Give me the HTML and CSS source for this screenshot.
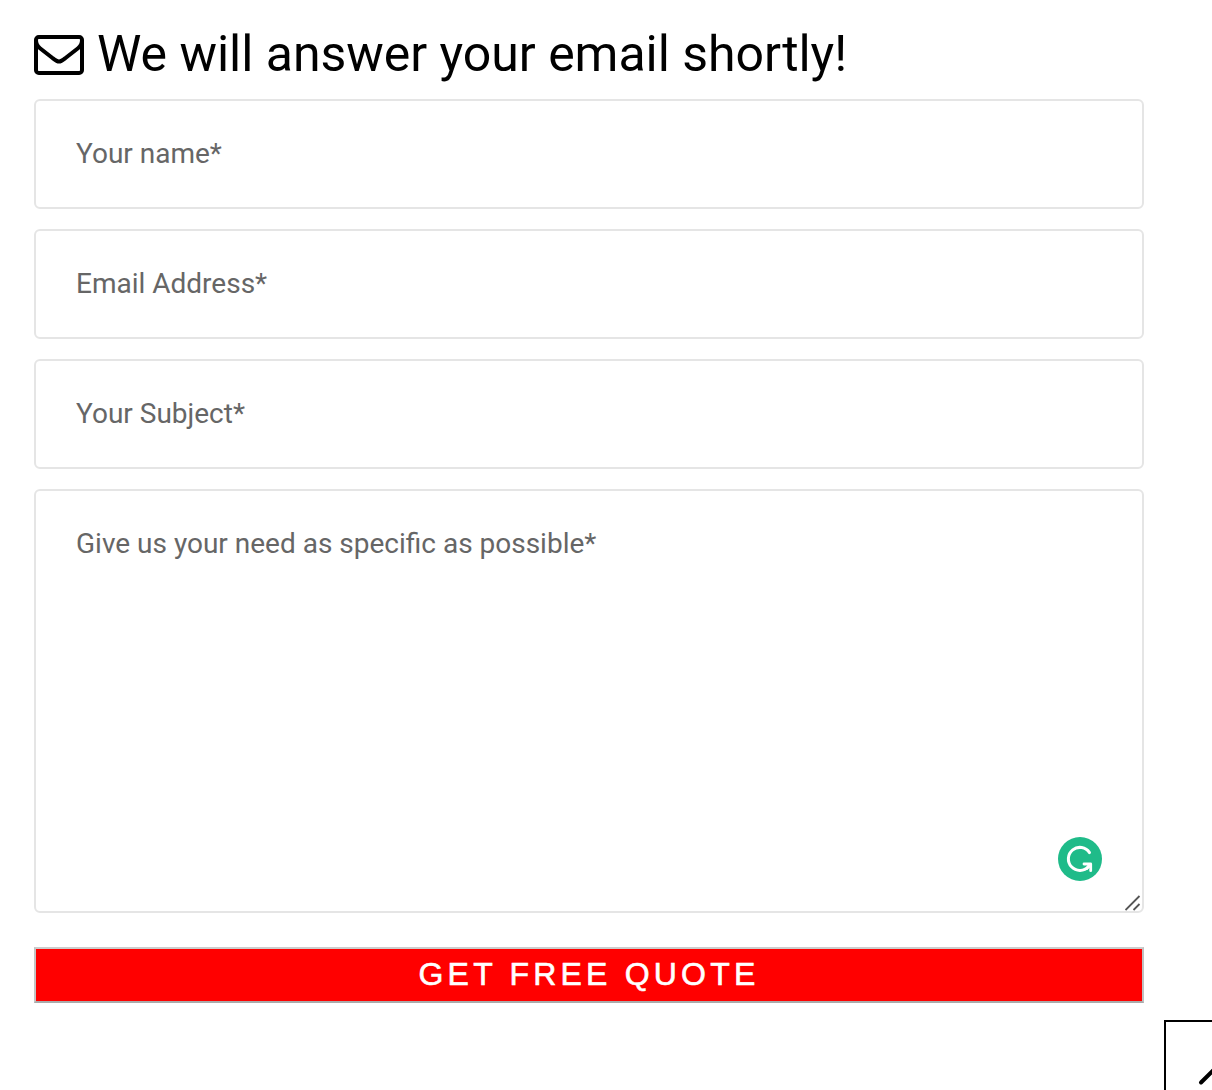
FILE: index.html
```html
<!DOCTYPE html>
<html lang="en">
<head>
<meta charset="utf-8">
<title>Get a free quote</title>
<link rel="stylesheet" href="styles.css">
</head>
<body>
<form class="quote">
  <h1 class="title">
    <svg class="envelope" viewBox="0 0 50 40" aria-hidden="true"><rect x="2" y="2" width="46" height="36" rx="2.800"/><path d="M2 5C2 8.500 3.500 11.200 6 13.200L18.500 23C20.500 24.600 22.800 26.600 25 26.600S29.500 24.600 31.500 23L44 13.200C46.500 11.200 48 8.500 48 5"/></svg>
    <span>We will answer your email shortly!</span>
  </h1>
  <input class="field" placeholder="Your name*">
  <input class="field" placeholder="Email Address*">
  <input class="field" placeholder="Your Subject*">
  <div class="message">
    <textarea class="field area" placeholder="Give us your need as specific as possible*"></textarea>
    <svg class="checker" viewBox="0 0 44 44" aria-hidden="true"><circle cx="22" cy="22" r="22" fill="#1fbb89"/><path d="M31.500 15.600A11.500 11.500 0 1 0 30.500 29.500" fill="none" stroke="#fff" stroke-width="3" stroke-linecap="round"/><path d="M26 27h6.700v6.700M32 27.500L29 31.500" fill="none" stroke="#fff" stroke-width="2.800" stroke-linecap="round" stroke-linejoin="round"/></svg>
    <svg class="grip" viewBox="0 0 16 16" aria-hidden="true"><path d="M.5 15L14.500 1M8.500 15L14.500 9"/></svg>
  </div>
  <button class="submit" type="button">GET FREE QUOTE</button>
</form>
<div class="to-top"><svg viewBox="0 0 68 68" aria-hidden="true"><path d="M35 60.500L49 46.500L63 60.500"/></svg></div>
</body>
</html>
```
FILE: styles.css
```css
* { box-sizing: border-box; }
body { margin: 0; height: 1090px; overflow: hidden; background: #fff; font-family: Roboto, sans-serif; }
.quote { width: 1110px; margin-left: 34px; padding-top: 25px; display: flex; flex-direction: column; }
.title { margin: 0 0 14px; height: 60px; display: flex; align-items: center; gap: 13px; font-size: 50px; font-weight: 400; line-height: 60px; letter-spacing: -.03px; white-space: nowrap; color: #000; }
.title span { margin-top: -2px; }
.envelope { width: 50px; height: 40px; fill: none; stroke: #000; stroke-width: 4; }
.field { display: block; width: 100%; height: 110px; margin: 0 0 20px; padding: 0 40px 2px; border: 2px solid #e5e5e5; border-radius: 6px; background: #fff; font: 28px/36px Roboto, sans-serif; outline: 0; }
.field::placeholder { color: #666; opacity: 1; }
.message { position: relative; height: 424px; margin-bottom: 34px; }
.area { height: 424px; padding-top: 35px; resize: none; }
.checker { position: absolute; right: 42px; bottom: 32px; width: 44px; height: 44px; }
.grip { position: absolute; right: 3px; bottom: 2px; width: 16px; height: 16px; fill: none; stroke: #555; stroke-width: 1.8; }
.submit { height: 56px; padding: 0 0 2px; border: 2px solid; border-color: #ccc #c0c0c0 #aaa #c4c4c4; background: #f00; background-clip: padding-box; color: #fff; font: 32px/50px "Liberation Sans", Arial, sans-serif; letter-spacing: 4.2px; -webkit-text-stroke: .6px #fff; }
.to-top { position: absolute; left: 1164px; top: 1020px; width: 100px; height: 100px; border: 2px solid #000; }
.to-top svg { width: 68px; height: 68px; fill: none; stroke: #000; stroke-width: 4; stroke-linecap: round; }
```
